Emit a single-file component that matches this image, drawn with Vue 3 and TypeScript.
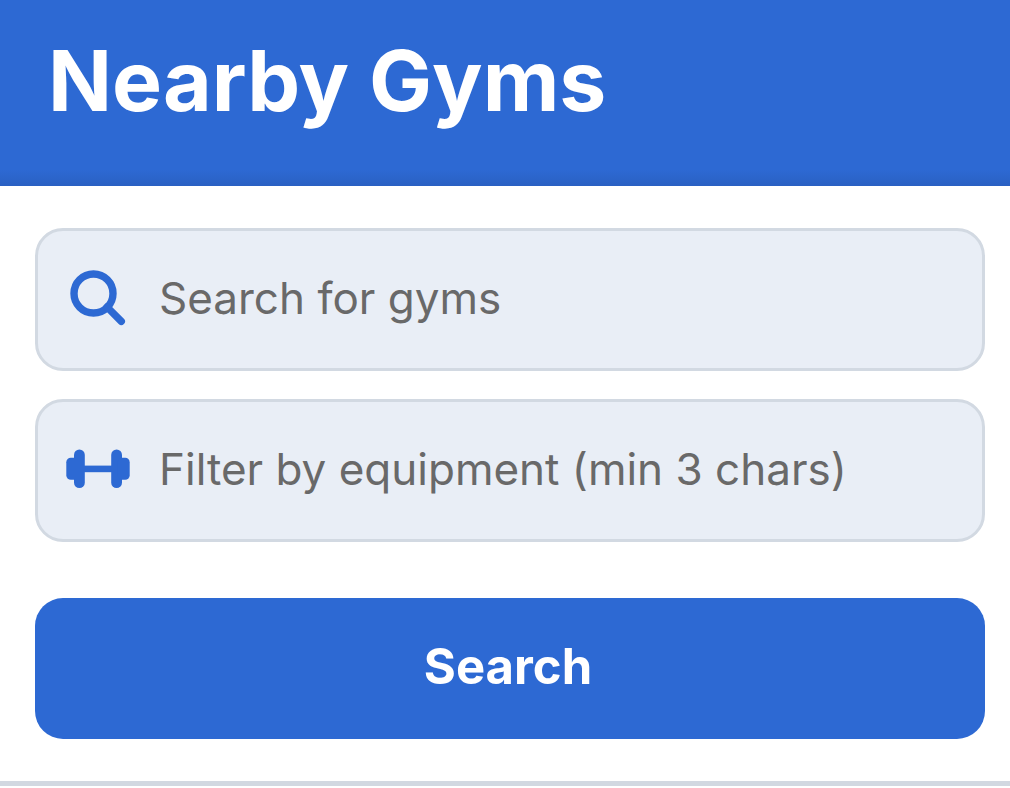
<script setup lang="ts">
import { ref } from 'vue'

const gymQuery = ref('')
const equipmentQuery = ref('')
</script>

<template>
  <main class="page">
    <header class="header">
      <h1>Nearby Gyms</h1>
    </header>
    <form class="search-panel" @submit.prevent>
      <label class="field" for="gym-search">
        <svg class="icon" viewBox="0 0 66 66" aria-hidden="true">
          <circle cx="28.5" cy="28.5" r="19.5" fill="none" stroke="currentColor" stroke-width="7.4" />
          <path d="M42 42L56.3 56.3" fill="none" stroke="currentColor" stroke-width="7.4" stroke-linecap="round" />
        </svg>
        <input id="gym-search" v-model="gymQuery" type="text" placeholder="Search for gyms" aria-label="Search for gyms" />
      </label>
      <label class="field" for="equipment-filter">
        <svg class="icon" viewBox="0 0 66 66" aria-hidden="true">
          <g fill="currentColor">
            <rect x="1.3" y="21.8" width="12" height="22" rx="4.5" />
            <rect x="9" y="13.5" width="10.8" height="38.6" rx="5.4" />
            <rect x="18" y="29.6" width="30" height="6.6" />
            <rect x="46.2" y="13.5" width="10.8" height="38.6" rx="5.4" />
            <rect x="52.7" y="21.8" width="12" height="22" rx="4.5" />
          </g>
        </svg>
        <input id="equipment-filter" v-model="equipmentQuery" type="text" placeholder="Filter by equipment (min 3 chars)" aria-label="Filter by equipment" />
      </label>
      <button class="submit" type="submit">Search</button>
    </form>
  </main>
</template>

<style>
body {
  margin: 0;
  background: #fff;
}
</style>

<style scoped>
.page {
  font-family: Inter, "Liberation Sans", sans-serif;
}
.header {
  padding: 28px 48px 52px;
  background: linear-gradient(to top, #2a60c2, #2d69d3 16px);
}
h1 {
  margin: 0;
  color: #fff;
  font-size: 84px;
  line-height: 106px;
  font-weight: 700;
}
.search-panel {
  display: flex;
  flex-direction: column;
  gap: 28px;
  padding: 42px 25px 42px 35px;
  border-bottom: 5px solid #d2d8e1;
}
.field {
  box-sizing: border-box;
  display: flex;
  align-items: center;
  gap: 28px;
  height: 143px;
  padding: 0 28px 4px 27px;
  border: 3px solid #d2d9e2;
  border-radius: 28px;
  background: #e9eef6;
}
.icon {
  width: 66px;
  height: 66px;
  flex: none;
  color: #2d69d3;
}
input {
  flex: 1;
  min-width: 0;
  padding: 0;
  border: 0;
  outline: 0;
  background: transparent;
  color: #333;
  font: 400 44px/56px Inter, "Liberation Sans", sans-serif;
}
input::placeholder {
  color: #696969;
  opacity: 1;
}
.submit {
  height: 141px;
  margin-top: 28px;
  padding: 0 4px 4px 0;
  border: 0;
  border-radius: 28px;
  background: #2d69d3;
  color: #fff;
  font: 700 49px/60px Inter, "Liberation Sans", sans-serif;
}
</style>
